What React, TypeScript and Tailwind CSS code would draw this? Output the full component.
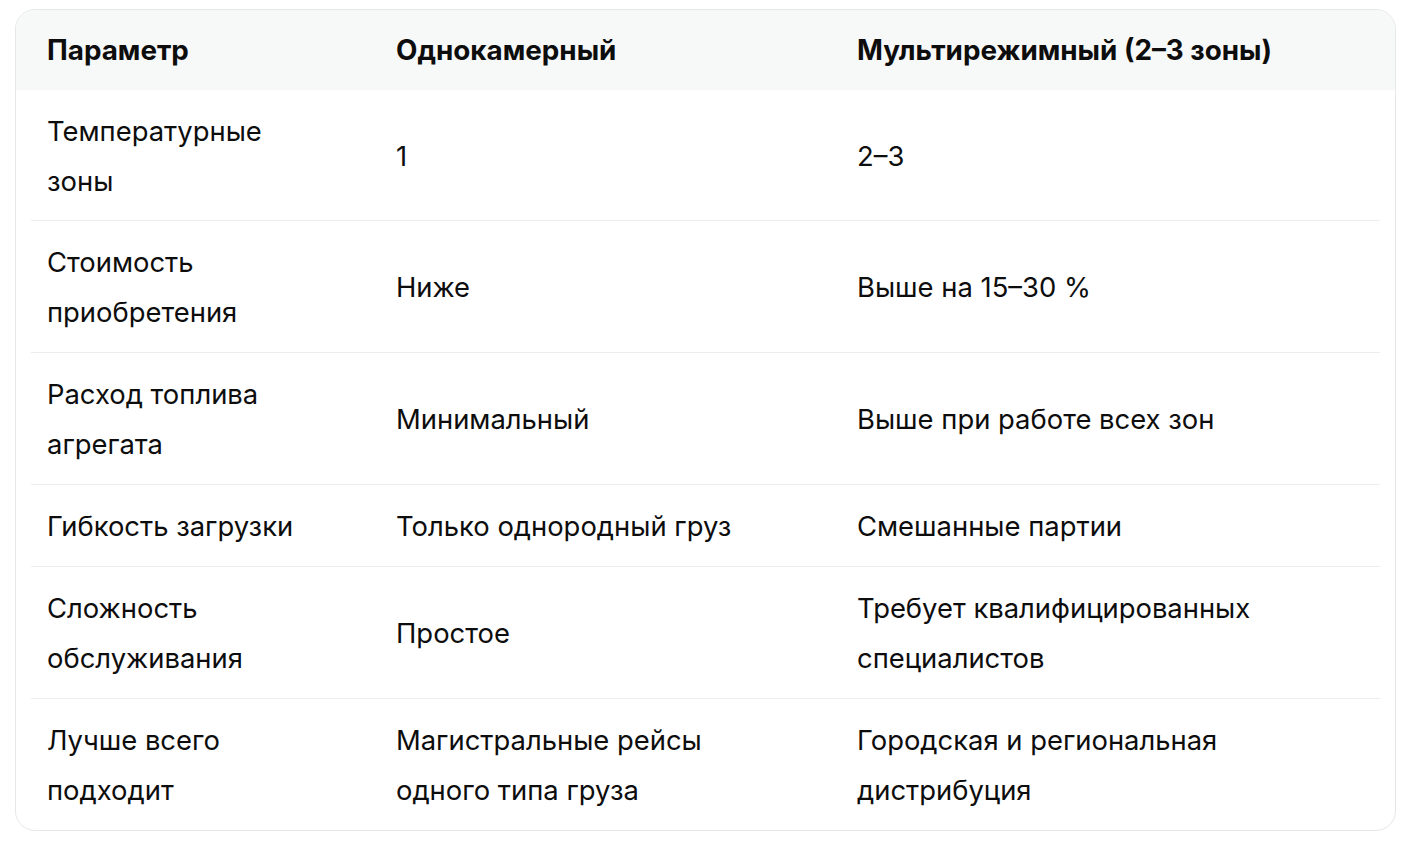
const rows: [string, string, string][] = [
  ["Температурные зоны", "1", "2–3"],
  ["Стоимость приобретения", "Ниже", "Выше на 15–30 %"],
  ["Расход топлива агрегата", "Минимальный", "Выше при работе всех зон"],
  ["Гибкость загрузки", "Только однородный груз", "Смешанные партии"],
  ["Сложность обслуживания", "Простое", "Требует квалифицированных специалистов"],
  ["Лучше всего подходит", "Магистральные рейсы одного типа груза", "Городская и региональная дистрибуция"],
];

const Cells = ({ cells }: { cells: [string, string, string] }) => (
  <>
    <div className="pl-[16px] pr-[50px]">{cells[0]}</div>
    <div className="pl-[16px] pr-[80px]">{cells[1]}</div>
    <div className="pl-[16px] pr-[40px]">{cells[2]}</div>
  </>
);

export default function App() {
  return (
    <div
      className="min-h-screen bg-white pt-[9px] pl-[15px] pr-[14px] text-[#0d0d0d]"
      style={{ fontFamily: "Inter, 'Noto Sans', sans-serif" }}
    >
      <div className="overflow-hidden rounded-[20px] border border-[#e6e8e8]">
        <div className="bg-[#f7f8f8] px-[15px]">
          <div className="grid h-[80px] grid-cols-[349px_461px_1fr] items-center text-[27.8px] leading-[50px] font-bold">
            <Cells cells={["Параметр", "Однокамерный", "Мультирежимный (2–3 зоны)"]} />
          </div>
        </div>
        <div className="px-[15px]">
          {rows.map((r, i) => (
            <div
              key={i}
              className={`grid grid-cols-[349px_461px_1fr] items-center text-[27.4px] leading-[50px] ${
                i === 0 ? "pt-[16px] pb-[14px]" : "pt-[16px] pb-[15px]"
              } ${i < rows.length - 1 ? "border-b border-[#eceeee]" : ""}`}
            >
              <Cells cells={r} />
            </div>
          ))}
        </div>
      </div>
    </div>
  );
}
